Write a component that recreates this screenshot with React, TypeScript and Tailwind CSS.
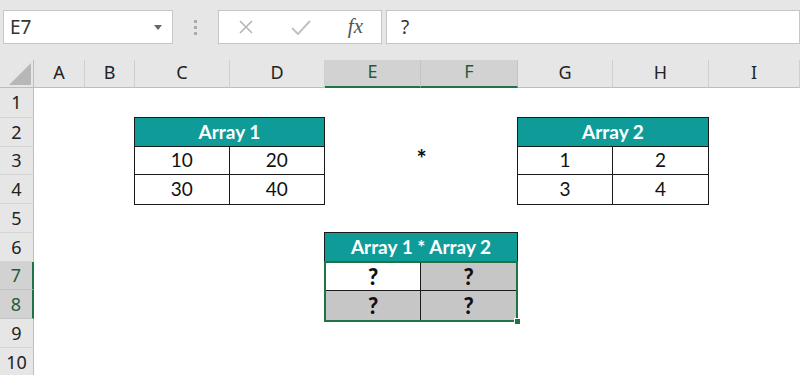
import type { ReactNode } from 'react'

const COLS = ['A', 'B', 'C', 'D', 'E', 'F', 'G', 'H', 'I']
const ROWS = [1, 2, 3, 4, 5, 6, 7, 8, 9, 10]
const SELECTED_COLS = ['E', 'F']
const SELECTED_ROWS = [7, 8]

const cellFont = { fontFamily: 'Lato, "Open Sans", sans-serif' }
const uiFont = { fontFamily: '"Noto Sans", "Open Sans", sans-serif' }

function FormulaBar() {
  return (
    <div className="flex items-center h-[60px] bg-[#e6e6e6] pl-[3px] pb-[6px]" style={uiFont}>
      {/* Name box */}
      <div className="flex items-center justify-between w-[170px] h-[34px] bg-white border border-[#c6c6c6] pl-[6px] pr-[10px]">
        <span className="text-[19px] text-[#333]">E7</span>
        <svg width="8" height="5" viewBox="0 0 8 5">
          <path d="M0 0 H8 L4 5 Z" fill="#666" />
        </svg>
      </div>
      {/* Separator dots */}
      <div className="flex flex-col gap-[3px] w-[45px] items-center">
        <div className="w-[3px] h-[3px] bg-[#aaa]" />
        <div className="w-[3px] h-[3px] bg-[#aaa]" />
        <div className="w-[3px] h-[3px] bg-[#aaa]" />
      </div>
      {/* Cancel / enter / fx */}
      <div className="flex items-center w-[164px] h-[34px] bg-white border border-[#c6c6c6]">
        <div className="w-[35px] flex justify-end">
          <svg width="16" height="16" viewBox="0 0 16 16">
            <path d="M2 2 L14 14 M14 2 L2 14" stroke="#b5b5b5" strokeWidth="1.6" />
          </svg>
        </div>
        <div className="w-[57px] flex justify-end">
          <svg width="20" height="16" viewBox="0 0 20 16">
            <path d="M1 9 L7 15 L19 2" stroke="#c2c2c2" strokeWidth="2" fill="none" />
          </svg>
        </div>
        <div className="w-[52px] flex justify-end">
          <span
            className="text-[21px] italic text-[#555]"
            style={{ fontFamily: '"Liberation Serif", serif' }}
          >
            fx
          </span>
        </div>
      </div>
      {/* Formula input */}
      <div className="flex items-center flex-1 h-[34px] ml-[4px] bg-white border border-[#c6c6c6] pl-[14px]">
        <span className="text-[19px] text-[#333]">?</span>
      </div>
    </div>
  )
}

function Corner() {
  return (
    <div className="flex items-end justify-end bg-[#e6e6e6] border-r border-b border-[#bdbdbd] pr-[2px] pb-[2px]">
      <svg width="22" height="22" viewBox="0 0 22 22">
        <path d="M22 0 V22 H0 Z" fill="#b7b7b7" />
      </svg>
    </div>
  )
}

function ColHeader({ label }: { label: string }) {
  const active = SELECTED_COLS.includes(label)
  return (
    <div
      className={
        active
          ? 'flex items-end justify-center pb-[1px] bg-[#d2d2d2] border-r border-[#c4c4c4] border-b-2 border-b-[#217346] text-[18px] text-[#1f5c3a]'
          : 'flex items-end justify-center pb-[1px] bg-[#e6e6e6] border-r border-[#cfcfcf] border-b border-b-[#bdbdbd] text-[18px] text-[#222]'
      }
      style={uiFont}
    >
      {label}
    </div>
  )
}

function RowHeader({ n }: { n: number }) {
  const active = SELECTED_ROWS.includes(n)
  return (
    <div
      className={
        active
          ? 'flex items-center justify-center bg-[#d2d2d2] border-b border-[#c4c4c4] border-r-2 border-r-[#217346] text-[18px] text-[#1f5c3a]'
          : 'flex items-center justify-center bg-[#e6e6e6] border-b border-[#d4d4d4] border-r border-r-[#bdbdbd] text-[18px] text-[#222]'
      }
      style={uiFont}
    >
      {n}
    </div>
  )
}

function Cell({
  children,
  className = '',
}: {
  children?: ReactNode
  className?: string
}) {
  return (
    <div className={`flex items-center justify-center text-[19px] text-[#111] ${className}`} style={cellFont}>
      {children}
    </div>
  )
}

function InputTable({ title, values }: { title: string; values: number[] }) {
  return (
    <div className="grid grid-cols-2 grid-rows-[29px_28px_29px] border border-[#1a1a1a] -ml-px -mt-px">
      <Cell className="col-span-2 bg-[#0f9b98] text-white font-bold border-b border-[#1a1a1a]">{title}</Cell>
      <Cell className="border-r border-b border-[#1a1a1a]">{values[0]}</Cell>
      <Cell className="border-b border-[#1a1a1a]">{values[1]}</Cell>
      <Cell className="border-r border-[#1a1a1a]">{values[2]}</Cell>
      <Cell>{values[3]}</Cell>
    </div>
  )
}

function ResultTable() {
  return (
    <div className="flex flex-col -mt-px">
      <Cell className="h-[29px] bg-[#0f9b98] text-white font-bold border border-[#1a1a1a] border-b-0">
        Array 1 * Array 2
      </Cell>
      <div className="relative grid grid-cols-2 grid-rows-[28px_29px] border-2 border-[#217346]">
        <Cell className="bg-white text-[22px] font-black border-r border-b border-[#1a1a1a]">?</Cell>
        <Cell className="bg-[#c6c6c6] text-[22px] font-black border-b border-[#1a1a1a]">?</Cell>
        <Cell className="bg-[#c6c6c6] text-[22px] font-black border-r border-[#1a1a1a]">?</Cell>
        <Cell className="bg-[#c6c6c6] text-[22px] font-black">?</Cell>
        {/* fill handle */}
        <div className="absolute -right-[5px] -bottom-[5px] w-[7px] h-[7px] bg-[#217346] border border-white" />
      </div>
    </div>
  )
}

export default function App() {
  return (
    <div className="w-[800px] h-[375px] overflow-hidden bg-white">
      <FormulaBar />
      <div className="grid grid-cols-[34px_51px_50px_95px_95px_96px_97px_95px_96px_91px] grid-rows-[28px_30px_29px_28px_29px_29px_29px_28px_29px_29px_29px]">
        <Corner />
        {COLS.map((c) => (
          <ColHeader key={c} label={c} />
        ))}
        {ROWS.map((r) => (
          <div key={r} className="col-start-1 grid" style={{ gridRow: r + 1 }}>
            <RowHeader n={r} />
          </div>
        ))}

        {/* Array 1 in C2:D4 */}
        <div className="col-start-4 col-span-2 row-start-3 row-span-3">
          <InputTable title="Array 1" values={[10, 20, 30, 40]} />
        </div>

        {/* Operator */}
        <div className="col-start-6 col-span-2 row-start-4 flex justify-center items-start">
          <span className="text-[24px] font-bold text-[#111] leading-none" style={cellFont}>*</span>
        </div>

        {/* Array 2 in G2:H4 */}
        <div className="col-start-8 col-span-2 row-start-3 row-span-3">
          <InputTable title="Array 2" values={[1, 2, 3, 4]} />
        </div>

        {/* Result in E6:F8 */}
        <div className="col-start-6 col-span-2 row-start-7 row-span-3 -ml-px">
          <ResultTable />
        </div>
      </div>
    </div>
  )
}
